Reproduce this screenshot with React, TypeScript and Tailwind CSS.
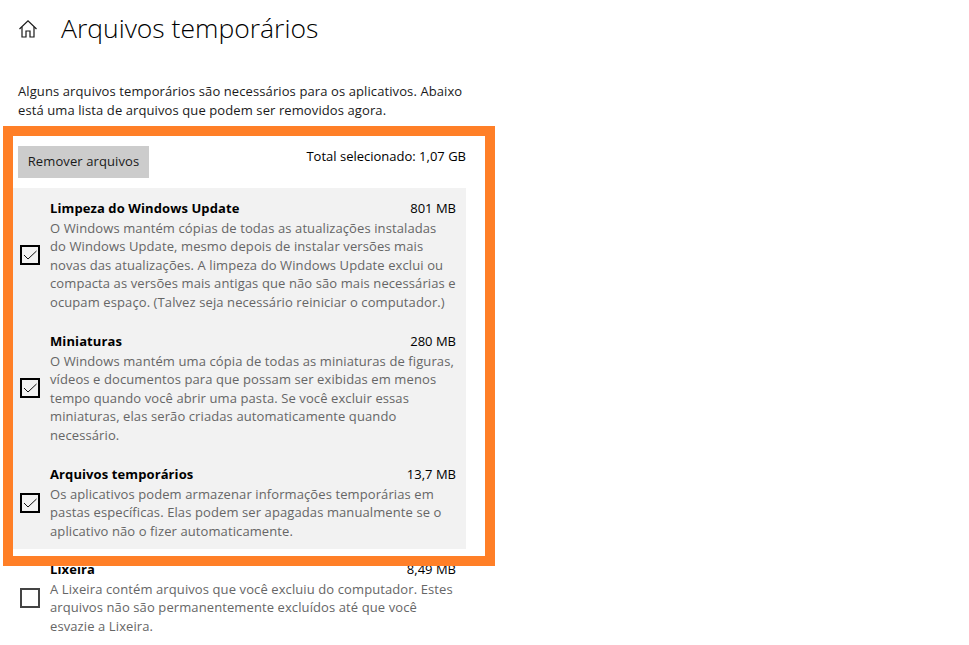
const font = { fontFamily: '"Open Sans", "Noto Sans", sans-serif' }

interface CleanupItem {
  title: string
  size: string
  lines: string[]
  checked: boolean
}

const selectedItems: CleanupItem[] = [
  {
    title: 'Limpeza do Windows Update',
    size: '801 MB',
    checked: true,
    lines: [
      'O Windows mantém cópias de todas as atualizações instaladas',
      'do Windows Update, mesmo depois de instalar versões mais',
      'novas das atualizações. A limpeza do Windows Update exclui ou',
      'compacta as versões mais antigas que não são mais necessárias e',
      'ocupam espaço. (Talvez seja necessário reiniciar o computador.)',
    ],
  },
  {
    title: 'Miniaturas',
    size: '280 MB',
    checked: true,
    lines: [
      'O Windows mantém uma cópia de todas as miniaturas de figuras,',
      'vídeos e documentos para que possam ser exibidas em menos',
      'tempo quando você abrir uma pasta. Se você excluir essas',
      'miniaturas, elas serão criadas automaticamente quando',
      'necessário.',
    ],
  },
  {
    title: 'Arquivos temporários',
    size: '13,7 MB',
    checked: true,
    lines: [
      'Os aplicativos podem armazenar informações temporárias em',
      'pastas específicas. Elas podem ser apagadas manualmente se o',
      'aplicativo não o fizer automaticamente.',
    ],
  },
]

const trash: CleanupItem = {
  title: 'Lixeira',
  size: '8,49 MB',
  checked: false,
  lines: [
    'A Lixeira contém arquivos que você excluiu do computador. Estes',
    'arquivos não são permanentemente excluídos até que você',
    'esvazie a Lixeira.',
  ],
}

function HomeIcon() {
  return (
    <svg width="20" height="20" viewBox="0 0 20 20" fill="none" stroke="#1a1a1a" strokeWidth="1.2" className="shrink-0">
      <path d="M1.5 10 L10 1.8 L18.5 10" />
      <path d="M4 8 V18 H8 V12 H12 V18 H16 V8" />
    </svg>
  )
}

function Row({ item }: { item: CleanupItem }) {
  return (
    <div className="flex items-center pl-[7px] pr-[10px] pt-[11px] pb-[10px] gap-[10px]">
      <div
        className={`w-5 h-5 shrink-0 border-2 flex items-center justify-center ${
          item.checked ? 'border-black' : 'border-[#444444]'
        }`}
      >
        {item.checked && (
          <svg width="16" height="16" viewBox="0 0 16 16" fill="none" stroke="#111111" strokeWidth="1">
            <path d="M2 8 L6 12 L14.5 4" />
          </svg>
        )}
      </div>
      <div className="flex-1 min-w-0 text-[13px] leading-[18.5px] whitespace-nowrap">
        <div className="flex justify-between text-black mb-[1px]">
          <span className="font-bold tracking-[0.1px]">{item.title}</span>
          <span>{item.size}</span>
        </div>
        {item.lines.map((line) => (
          <div key={line} className="text-[#666666] tracking-[0.1px]">
            {line}
          </div>
        ))}
      </div>
    </div>
  )
}

export default function App() {
  return (
    <div className="relative w-[969px] h-[645px] overflow-hidden bg-white" style={font}>
      {/* Header */}
      <div className="flex items-center h-[58px] pl-[18px] gap-[23px]">
        <HomeIcon />
        <h1 className="text-[26.5px] font-light text-black whitespace-nowrap">Arquivos temporários</h1>
      </div>

      <p className="mt-[24px] pl-[18px] text-[13px] leading-[18.5px] tracking-[0.1px] text-[#1a1a1a] whitespace-nowrap">
        Alguns arquivos temporários são necessários para os aplicativos. Abaixo
        <br />
        está uma lista de arquivos que podem ser removidos agora.
      </p>

      <div className="w-[453px] ml-[13px] mt-[27px]">
        <div className="flex justify-between items-start pl-[5px]">
          <button className="w-[131px] h-[32px] bg-[#cccccc] text-[13px] tracking-[0.1px] text-[#1a1a1a]">Remover arquivos</button>
          <span className="text-[13px] leading-[18.5px] text-black mt-[1px] whitespace-nowrap">Total selecionado: 1,07 GB</span>
        </div>

        <div className="mt-[10px] bg-[#f2f2f2] h-[361px]">
          {selectedItems.map((item) => (
            <Row key={item.title} item={item} />
          ))}
        </div>

        <div>
          <Row item={trash} />
        </div>
      </div>

      {/* Highlight drawn over the page */}
      <div className="absolute left-[3px] top-[126px] w-[492px] h-[440px] border-[10px] border-[#ff7f27] pointer-events-none" />
    </div>
  )
}
